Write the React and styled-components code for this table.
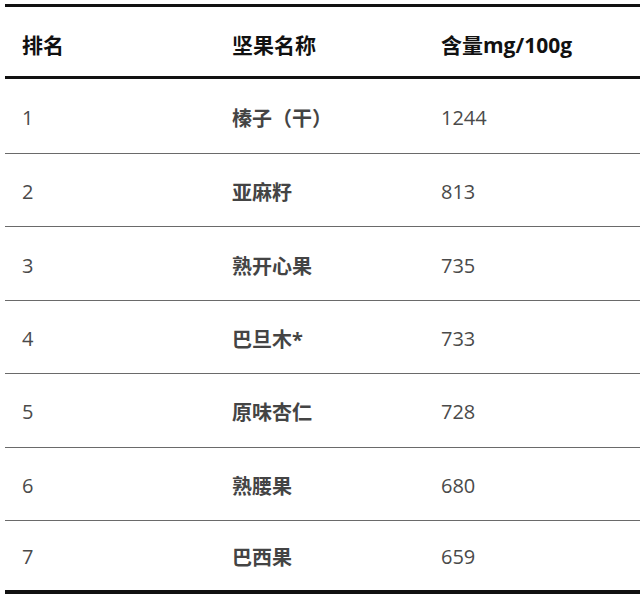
import React from 'react'
import styled, { createGlobalStyle } from 'styled-components'

const GlobalStyle = createGlobalStyle`
  html, body {
    margin: 0;
    padding: 0;
    background: #ffffff;
  }
  body {
    font-family: "Open Sans", "Noto Sans CJK SC", sans-serif;
  }
`

const rows = [
  ['1', '榛子（干）', '1244'],
  ['2', '亚麻籽', '813'],
  ['3', '熟开心果', '735'],
  ['4', '巴旦木*', '733'],
  ['5', '原味杏仁', '728'],
  ['6', '熟腰果', '680'],
  ['7', '巴西果', '659'],
]

// row heights measured from the picture, line included
const heights = [75, 73.4, 73.4, 73.4, 73.4, 73.4, 69]

function App() {
  return (
    <>
      <GlobalStyle />
      <Page>
        <Table>
          <HeadRow>
            <HeadCell>排名</HeadCell>
            <HeadCell>坚果名称</HeadCell>
            <HeadCell>含量mg/100g</HeadCell>
          </HeadRow>
          {rows.map((r, i) => (
            <Row key={r[0]} h={heights[i]} last={i === rows.length - 1}>
              <Cell>{r[0]}</Cell>
              <Cell bold>{r[1]}</Cell>
              <Cell>{r[2]}</Cell>
            </Row>
          ))}
        </Table>
      </Page>
    </>
  )
}

export default App

const Page = styled.div`
  padding: 4px 0 0 5px;
  width: 635px;
  height: 591px;
  overflow: hidden;
`

const Table = styled.div`
  display: flex;
  flex-direction: column;
  border-top: 3px solid #111;
  border-bottom: 4px solid #111;
`

const HeadRow = styled.div`
  display: grid;
  grid-template-columns: 210px 209px 1fr;
  height: 69px;
  border-bottom: 3px solid #111;
`

const HeadCell = styled.div`
  display: flex;
  align-items: center;
  padding: 5px 0 0 17px;
  font-size: 21px;
  font-weight: 700;
  color: #111;
`

const Row = styled.div`
  display: grid;
  grid-template-columns: 210px 209px 1fr;
  box-sizing: border-box;
  height: ${p => p.h}px;
  border-bottom: ${p => (p.last ? 'none' : '1px solid #6a6a6a')};
`

const Cell = styled.div`
  display: flex;
  align-items: center;
  padding: 3px 0 0 17px;
  font-size: 20px;
  font-weight: ${p => (p.bold ? 700 : 400)};
  color: ${p => (p.bold ? '#444' : '#4a4a4a')};
`
